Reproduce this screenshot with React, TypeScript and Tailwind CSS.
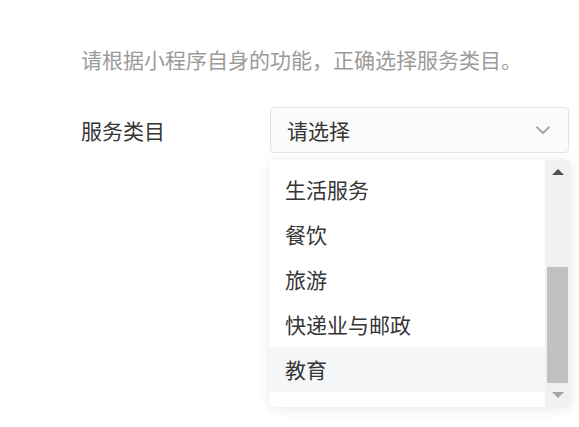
const ITEMS = ["生活服务", "餐饮", "旅游", "快递业与邮政", "教育"];

function Chevron() {
  return (
    <svg width="16" height="10" viewBox="0 0 16 10" fill="none">
      <path d="M1.5 1.8 L8 8 L14.5 1.8" stroke="#a6a6a6" strokeWidth="2" />
    </svg>
  );
}

export default function App() {
  return (
    <div
      className="w-[579px] h-[427px] bg-white overflow-hidden"
      style={{ fontFamily: '"Noto Sans CJK SC", "Noto Sans", sans-serif' }}
    >
      <div className="pl-[81px] pt-[49px]">
        {/* hint */}
        <p className="text-[21px] leading-[21px] text-[#9b9b9b] whitespace-nowrap">
          请根据小程序自身的功能，正确选择服务类目。
        </p>

        {/* form row */}
        <div className="mt-[37px] flex items-center">
          <span className="w-[189px] text-[21px] leading-[21px] text-[#353535]">服务类目</span>
          <div className="relative w-[299px]">
            <div className="h-[46px] rounded-[4px] border border-[#e4e4e4] bg-[#fbfbfb] flex items-center justify-between pl-[16px] pr-[17px]">
              <span className="text-[21px] leading-[21px] text-[#353535]">请选择</span>
              <Chevron />
            </div>

            {/* dropdown */}
            <div className="absolute left-0 top-[53px] w-[300px] h-[247px] bg-white rounded-[4px] shadow-[0_2px_14px_rgba(0,0,0,0.09)] flex overflow-hidden">
              <ul className="flex-1 pt-[7px]">
                {ITEMS.map((item) => (
                  <li
                    key={item}
                    className={
                      "h-[45px] pl-[15px] flex items-center text-[21px] leading-[21px] text-[#353535] " +
                      (item === "教育" ? "bg-[#f5f6f7]" : "")
                    }
                  >
                    {item}
                  </li>
                ))}
              </ul>

              {/* scrollbar */}
              <div className="w-[25px] bg-[#f1f1f1] flex flex-col">
                <div className="h-[24px] flex items-center justify-center">
                  <div className="w-0 h-0 border-l-[6px] border-r-[6px] border-b-[6px] border-l-transparent border-r-transparent border-b-[#505050]" />
                </div>
                <div className="flex-1 flex flex-col px-[2px]">
                  <div className="h-[83px]" />
                  <div className="flex-1 bg-[#c1c1c1]" />
                </div>
                <div className="h-[24px] flex items-center justify-center">
                  <div className="w-0 h-0 border-l-[6px] border-r-[6px] border-t-[6px] border-l-transparent border-r-transparent border-t-[#a3a3a3]" />
                </div>
              </div>
            </div>
          </div>
        </div>
      </div>
    </div>
  );
}
